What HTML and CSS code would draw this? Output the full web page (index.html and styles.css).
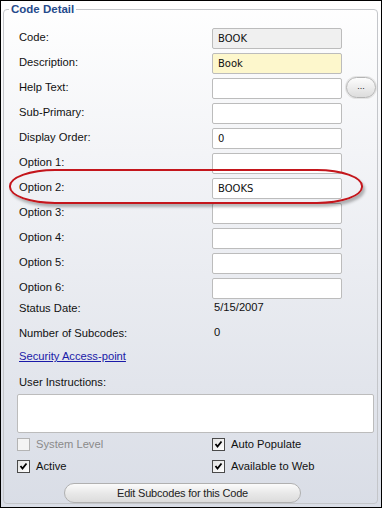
FILE: index.html
```html
<!DOCTYPE html>
<html>
<head>
<meta charset="utf-8">
<link rel="stylesheet" href="styles.css">
</head>
<body>
<div class="frame">
  <fieldset class="panel">
    <legend class="title">Code Detail</legend>
    <div class="content">
      <div class="form">
        <div class="lbl">Code:</div><div class="inp ro">BOOK</div><div></div>
        <div class="lbl">Description:</div><div class="inp req">Book</div><div></div>
        <div class="lbl">Help Text:</div><div class="inp"></div><div class="dots">...</div>
        <div class="lbl">Sub-Primary:</div><div class="inp"></div><div></div>
        <div class="lbl">Display Order:</div><div class="inp">0</div><div></div>
        <div class="lbl">Option 1:</div><div class="inp"></div><div></div>
        <div class="lbl">Option 2:</div><div class="inp">BOOKS</div><div></div>
        <div class="lbl">Option 3:</div><div class="inp"></div><div></div>
        <div class="lbl">Option 4:</div><div class="inp"></div><div></div>
        <div class="lbl">Option 5:</div><div class="inp"></div><div></div>
        <div class="lbl">Option 6:</div><div class="inp"></div><div></div>
      </div>
      <div class="info status"><span class="lbl">Status Date:</span><span class="val">5/15/2007</span></div>
      <div class="info subs"><span class="lbl">Number of Subcodes:</span><span class="val">0</span></div>
      <div class="info link-row"><a class="link" href="#">Security Access-point</a></div>
      <div class="info instr"><span class="lbl">User Instructions:</span></div>
      <div class="textarea"></div>
      <div class="checks">
        <div class="chk disabled"><span class="box"></span><span>System Level</span></div>
        <div class="chk"><span class="box"><svg width="9" height="9" viewBox="0 0 9 9"><path d="M1.5 4 L3.5 6.5 L7.5 1.5" fill="none" stroke="#000" stroke-width="1.8"/></svg></span><span>Auto Populate</span></div>
        <div class="chk"><span class="box"><svg width="9" height="9" viewBox="0 0 9 9"><path d="M1.5 4 L3.5 6.5 L7.5 1.5" fill="none" stroke="#000" stroke-width="1.8"/></svg></span><span>Active</span></div>
        <div class="chk"><span class="box"><svg width="9" height="9" viewBox="0 0 9 9"><path d="M1.5 4 L3.5 6.5 L7.5 1.5" fill="none" stroke="#000" stroke-width="1.8"/></svg></span><span>Available to Web</span></div>
      </div>
      <div class="btn">Edit Subcodes for this Code</div>
    </div>
  </fieldset>
  <div class="highlight"></div>
</div>
</body>
</html>
```
FILE: styles.css
```css
* { box-sizing: border-box; }
html, body { margin: 0; padding: 0; }
body {
  font-family: "Liberation Sans", Arial, sans-serif;
  font-size: 11.2px;
  color: #111;
}
.frame {
  position: relative;
  width: 382px;
  height: 508px;
  border: 1px solid #000;
  background: linear-gradient(#ffffff 0%, #f3f4f7 30%, #d9dde6 100%);
  padding: 1px 3px 3px 2px;
}
.panel {
  margin: 0;
  padding: 0;
  border: 1px solid #c4c6ca;
  border-radius: 4px;
  height: 502px;
  min-width: 0;
}
.title {
  margin-left: 5px;
  padding: 0 2px;
  font-weight: bold;
  font-size: 11.5px;
  line-height: 14px;
  color: #254a8c;
}
.content {
  padding: 12px 3px 0 13px;
  display: flex;
  flex-direction: column;
}
.form {
  display: grid;
  grid-template-columns: 195px 130px 34px;
  grid-auto-rows: 21px;
  row-gap: 4px;
}
.lbl {
  padding-left: 2px;
  line-height: 18px;
}
.inp {
  border: 1px solid #bcbcbc;
  border-radius: 2px;
  background: #fff;
  font-family: "DejaVu Sans", Verdana, sans-serif;
  font-size: 10px;
  line-height: 19px;
  padding-left: 5px;
  color: #111;
}
.inp.ro { background: #f0f0f0; }
.inp.req { background: #fdf7cc; }
.dots {
  margin-left: 4px;
  width: 30px;
  height: 21px;
  margin-top: -1px;
  border: 1px solid #b4b4b4;
  border-radius: 11px;
  background: linear-gradient(#fdfdfd, #dcdcdc);
  box-shadow: 0 0 0 1px #e4e4e4;
  font-size: 9px;
  text-align: center;
  line-height: 17px;
  color: #222;
}
.info {
  display: grid;
  grid-template-columns: 197px auto;
  line-height: 16px;
}
.info .val { padding-left: 0; }
.status { margin-top: 0; }
.subs { margin-top: 7px; }
.link-row { margin-top: 6px; padding-left: 2px; display: block; }
.link { color: #1a1aa8; text-decoration: underline; }
.instr { margin-top: 9px; }
.textarea {
  margin-top: 3px;
  width: 357px;
  height: 39px;
  border: 1px solid #bcbcbc;
  border-radius: 2px;
  background: #fff;
}
.checks {
  margin-top: 5px;
  display: grid;
  grid-template-columns: 195px auto;
  grid-auto-rows: 13px;
  row-gap: 9px;
}
.chk {
  display: flex;
  align-items: center;
  gap: 6px;
  line-height: 13px;
  color: #111;
}
.chk.disabled { color: #8a8a8a; }
.box {
  width: 13px;
  height: 13px;
  border: 1px solid #4a4a4a;
  background: linear-gradient(135deg, #e2e2e2, #ffffff);
  display: flex;
  align-items: center;
  justify-content: center;
}
.chk.disabled .box { border-color: #b4b4b4; background: #f4f4f4; }
.btn {
  margin-top: 10px;
  margin-left: 47px;
  width: 237px;
  height: 20px;
  border: 1px solid #b0b0b0;
  border-radius: 10px;
  background: linear-gradient(#fbfbfb, #e9e9e9 50%, #dcdcdc);
  text-align: center;
  line-height: 18px;
  font-size: 11px;
  letter-spacing: -0.2px;
  color: #222;
}
.highlight {
  position: absolute;
  left: 8px;
  top: 168px;
  width: 354px;
  height: 35px;
  border: 2px solid #c4161c;
  border-radius: 46px / 17px;
  box-shadow: 2px 3px 3px rgba(0, 0, 0, 0.28);
  pointer-events: none;
}
```
